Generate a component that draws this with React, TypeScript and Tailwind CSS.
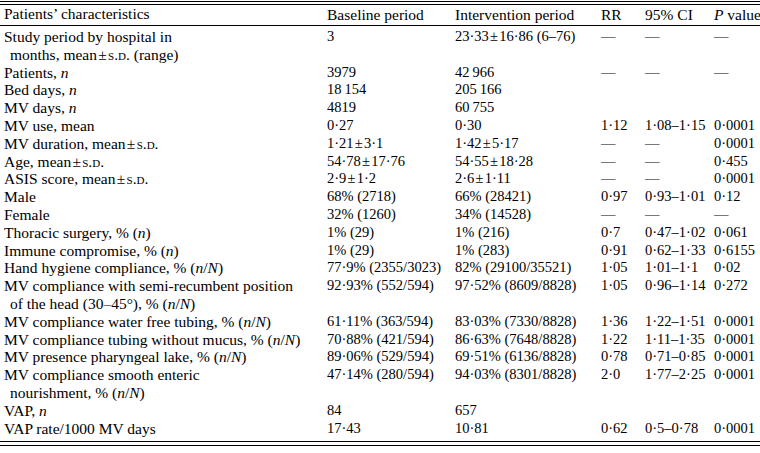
import type { ReactNode } from 'react'

const I = ({ children }: { children: ReactNode }) => <span className="italic">{children}</span>
const SD = () => <span className="[font-variant:small-caps]">s.d.</span>
const PM = '\u200A±\u200A'

interface Row {
  label: ReactNode
  cont?: ReactNode
  base?: string
  inter?: string
  rr?: string
  ci?: string
  p?: string
}

const D = '—'

const rows: Row[] = [
  { label: 'Study period by hospital in', cont: <>months, mean{PM}<SD /> (range)</>, base: '3', inter: `23·33${PM}16·86 (6–76)`, rr: D, ci: D, p: D },
  { label: <>Patients, <I>n</I></>, base: '3979', inter: '42\u2009966', rr: D, ci: D, p: D },
  { label: <>Bed days, <I>n</I></>, base: '18\u2009154', inter: '205\u2009166' },
  { label: <>MV days, <I>n</I></>, base: '4819', inter: '60\u2009755' },
  { label: 'MV use, mean', base: '0·27', inter: '0·30', rr: '1·12', ci: '1·08–1·15', p: '0·0001' },
  { label: <>MV duration, mean{PM}<SD /></>, base: `1·21${PM}3·1`, inter: `1·42${PM}5·17`, rr: D, ci: D, p: '0·0001' },
  { label: <>Age, mean{PM}<SD /></>, base: `54·78${PM}17·76`, inter: `54·55${PM}18·28`, rr: D, ci: D, p: '0·455' },
  { label: <>ASIS score, mean{PM}<SD /></>, base: `2·9${PM}1·2`, inter: `2·6${PM}1·11`, rr: D, ci: D, p: '0·0001' },
  { label: 'Male', base: '68% (2718)', inter: '66% (28421)', rr: '0·97', ci: '0·93–1·01', p: '0·12' },
  { label: 'Female', base: '32% (1260)', inter: '34% (14528)', rr: D, ci: D, p: D },
  { label: <>Thoracic surgery, % (<I>n</I>)</>, base: '1% (29)', inter: '1% (216)', rr: '0·7', ci: '0·47–1·02', p: '0·061' },
  { label: <>Immune compromise, % (<I>n</I>)</>, base: '1% (29)', inter: '1% (283)', rr: '0·91', ci: '0·62–1·33', p: '0·6155' },
  { label: <>Hand hygiene compliance, % (<I>n</I>/<I>N</I>)</>, base: '77·9% (2355/3023)', inter: '82% (29100/35521)', rr: '1·05', ci: '1·01–1·1', p: '0·02' },
  { label: 'MV compliance with semi-recumbent position', cont: <>of the head (30–45°), % (<I>n</I>/<I>N</I>)</>, base: '92·93% (552/594)', inter: '97·52% (8609/8828)', rr: '1·05', ci: '0·96–1·14', p: '0·272' },
  { label: <>MV compliance water free tubing, % (<I>n</I>/<I>N</I>)</>, base: '61·11% (363/594)', inter: '83·03% (7330/8828)', rr: '1·36', ci: '1·22–1·51', p: '0·0001' },
  { label: <>MV compliance tubing without mucus, % (<I>n</I>/<I>N</I>)</>, base: '70·88% (421/594)', inter: '86·63% (7648/8828)', rr: '1·22', ci: '1·11–1·35', p: '0·0001' },
  { label: <>MV presence pharyngeal lake, % (<I>n</I>/<I>N</I>)</>, base: '89·06% (529/594)', inter: '69·51% (6136/8828)', rr: '0·78', ci: '0·71–0·85', p: '0·0001' },
  { label: 'MV compliance smooth enteric', cont: <>nourishment, % (<I>n</I>/<I>N</I>)</>, base: '47·14% (280/594)', inter: '94·03% (8301/8828)', rr: '2·0', ci: '1·77–2·25', p: '0·0001' },
  { label: <>VAP, <I>n</I></>, base: '84', inter: '657' },
  { label: 'VAP rate/1000 MV days', base: '17·43', inter: '10·81', rr: '0·62', ci: '0·5–0·78', p: '0·0001' },
]

export default function App() {
  const td = 'align-top p-0 whitespace-nowrap text-[14.5px]'
  return (
    <div className="w-[760px] h-[453px] bg-white text-black font-['Liberation_Serif','Times_New_Roman',serif] text-[15.5px] leading-[17.8px] overflow-hidden">
      <div className="mt-px h-[4px] border-y border-black" />
      <table className="w-[760px] table-fixed border-collapse">
        <colgroup>
          <col className="w-[327px]" />
          <col className="w-[128px]" />
          <col className="w-[146px]" />
          <col className="w-[44px]" />
          <col className="w-[69px]" />
          <col className="w-[46px]" />
        </colgroup>
        <thead>
          <tr className="border-b border-black leading-[18px]">
            <th className="text-left font-normal pl-1 pt-0 pb-[2px]">Patients’ characteristics</th>
            <th className="text-left font-normal">Baseline period</th>
            <th className="text-left font-normal">Intervention period</th>
            <th className="text-left font-normal">RR</th>
            <th className="text-left font-normal">95% CI</th>
            <th className="text-left font-normal whitespace-nowrap"><I>P</I> value</th>
          </tr>
        </thead>
        <tbody>
          {rows.map((r, i) => (
            <tr key={i} className={i === 0 ? '[&>td]:pt-[2px]' : ''}>
              <td className="align-top p-0 pl-1 whitespace-nowrap">
                <div>{r.label}</div>
                {r.cont && <div className="pl-[6px]">{r.cont}</div>}
              </td>
              <td className={td}>{r.base}</td>
              <td className={td}>{r.inter}</td>
              <td className={td}>{r.rr}</td>
              <td className={td}>{r.ci}</td>
              <td className={td}>{r.p}</td>
            </tr>
          ))}
        </tbody>
      </table>
      <div className="mt-[3.5px] h-[5px] border-y border-black" />
    </div>
  )
}
